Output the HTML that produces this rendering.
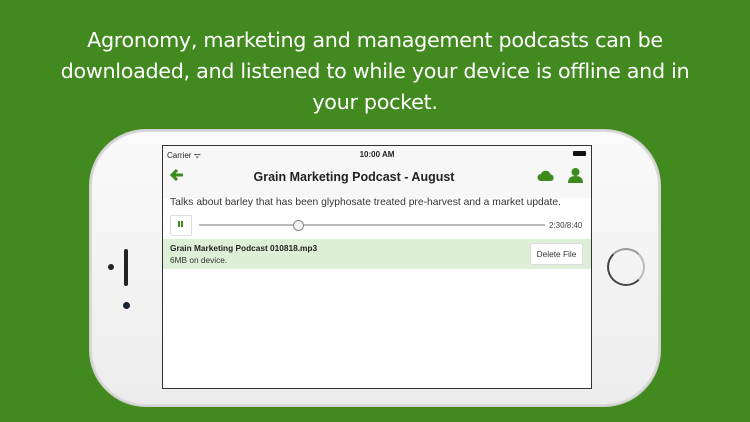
<!DOCTYPE html>
<html><head><style>
body{margin:0;width:750px;height:422px;background:#428a1f;overflow:hidden;font-family:"Liberation Sans",sans-serif;position:relative}
.h{position:absolute;top:25px;left:0;width:750px;text-align:center;color:#fff;font-size:20.7px;line-height:31px;font-family:"DejaVu Sans","Liberation Sans",sans-serif;letter-spacing:-0.3px}
.phone{position:absolute;left:90px;top:130px;width:570px;height:276px;border-radius:56px;background:linear-gradient(#fafafa,#ececec);box-shadow:inset 0 0 0 2px #d8d8d8,0 0 0 1px #cfcfcf}
.screen{position:absolute;left:162px;top:145px;width:428px;height:242px;border:1px solid #333;background:#fff;overflow:hidden}
.abs{position:absolute}
</style></head><body>
<div class="h">Agronomy, marketing and management podcasts can be<br>downloaded, and listened to while your device is offline and in<br>your pocket.</div>
<div class="phone"></div>
<div class="abs" style="left:124px;top:249px;width:4px;height:37px;background:#222;border-radius:2px"></div>
<div class="abs" style="left:108px;top:264px;width:6px;height:6px;background:#222;border-radius:50%"></div>
<div class="abs" style="left:123px;top:302px;width:7px;height:7px;background:#1a2236;border-radius:50%"></div>
<div class="abs" style="left:607px;top:248px;width:34px;height:34px;border:2px solid #444;border-radius:50%;border-right-color:#bbb;border-top-color:#999"></div>
<div class="screen">
 <div class="abs" style="left:0;top:0;width:428px;height:52px;background:#f7f7f7"></div>
 <div class="abs" style="left:4px;top:4px;font-size:8px;color:#222">Carrier ᯤ</div>
 <div class="abs" style="left:0;top:4px;width:428px;text-align:center;font-size:8px;font-weight:bold;color:#222">10:00 AM</div>
 <div class="abs" style="left:410px;top:5px;width:13px;height:5px;background:#111;border-radius:1px"></div>
 <svg class="abs" style="left:7px;top:22px" width="14" height="14" viewBox="0 0 14 14"><path d="M13 7H3M7 2L2 7l5 5" stroke="#3d8a1c" stroke-width="3" fill="none"/></svg>
 <div class="abs" style="left:0;top:24px;width:382px;text-align:center;font-size:12.5px;font-weight:bold;color:#222">Grain Marketing Podcast - August</div>
 <svg class="abs" style="left:374px;top:24px" width="18" height="12" viewBox="0 0 18 12"><path d="M4 11a3.5 3.5 0 0 1 0-7 5 5 0 0 1 9.5 0.5A3.3 3.3 0 0 1 14 11z" fill="#3d8a1c"/></svg>
 <svg class="abs" style="left:405px;top:21px" width="15" height="16" viewBox="0 0 15 16"><circle cx="7.5" cy="5" r="4" fill="#3d8a1c"/><path d="M0 16c0-5 3-7 7.5-7s7.5 2 7.5 7z" fill="#3d8a1c"/></svg>
 <div class="abs" style="left:7px;top:51px;font-size:10.3px;color:#333">Talks about barley that has been glyphosate treated pre-harvest and a market update.</div>
 <div class="abs" style="left:7px;top:69px;width:20px;height:19px;border:1px solid #ddd;border-radius:2px;background:#fff"></div>
 <div class="abs" style="left:15px;top:75px;width:2px;height:6px;background:#3d8a1c;box-shadow:3px 0 #3d8a1c"></div>
 <div class="abs" style="left:36px;top:78px;width:346px;height:2px;background:#bbb"></div>
 <div class="abs" style="left:130px;top:74px;width:9px;height:9px;border:1px solid #888;border-radius:50%;background:#f4f4f4"></div>
 <div class="abs" style="left:386px;top:75px;font-size:8px;color:#444">2:30/8:40</div>
 <div class="abs" style="left:0;top:93px;width:428px;height:30px;background:#ddefd6"></div>
 <div class="abs" style="left:7px;top:97px;font-size:8.3px;font-weight:bold;color:#222">Grain Marketing Podcast 010818.mp3</div>
 <div class="abs" style="left:7px;top:109px;font-size:8.3px;color:#333">6MB on device.</div>
 <div class="abs" style="left:367px;top:97px;width:51px;height:20px;background:#fff;border:1px solid #ddd;border-radius:2px;font-size:8.3px;color:#333;text-align:center;line-height:20px">Delete File</div>
</div>
</body></html>
